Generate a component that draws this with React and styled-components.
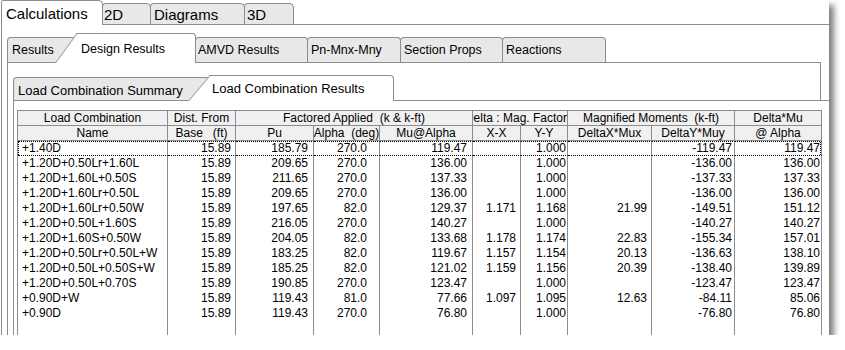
import React from "react";
import styled, { createGlobalStyle } from "styled-components";

const GlobalStyle = createGlobalStyle`
  html, body {
    margin: 0;
    padding: 0;
    background: #fff;
  }
  body {
    font-family: "Liberation Sans", Arial, sans-serif;
    color: #000;
  }
`;

const columns = [
  { key: "name", width: 150, align: "left", pad: 4 },
  { key: "dist", width: 68, pad: 4 },
  { key: "pu", width: 78, pad: 5 },
  { key: "alpha", width: 66, pad: 12 },
  { key: "mu", width: 93, pad: 5 },
  { key: "xx", width: 48, pad: 4 },
  { key: "yy", width: 47, pad: 1 },
  { key: "dx", width: 84, pad: 4 },
  { key: "dy", width: 83, pad: 2 },
  { key: "dmu", width: 87, pad: 1 },
];

const headTop = [
  { text: "Load Combination", span: 1 },
  { text: "Dist. From", span: 1 },
  { text: "Factored Applied  (k & k-ft)", span: 3 },
  { text: "Delta : Mag. Factor", span: 2, clip: true },
  { text: "Magnified Moments  (k-ft)", span: 2 },
  { text: "Delta*Mu", span: 1 },
];

const headBottom = [
  "Name",
  "Base   (ft)",
  "Pu",
  "Alpha  (deg)",
  "Mu@Alpha",
  "X-X",
  "Y-Y",
  "DeltaX*Mux",
  "DeltaY*Muy",
  "@ Alpha",
];

const rows = [
  ["+1.40D", "15.89", "185.79", "270.0", "119.47", "", "1.000", "", "-119.47", "119.47"],
  ["+1.20D+0.50Lr+1.60L", "15.89", "209.65", "270.0", "136.00", "", "1.000", "", "-136.00", "136.00"],
  ["+1.20D+1.60L+0.50S", "15.89", "211.65", "270.0", "137.33", "", "1.000", "", "-137.33", "137.33"],
  ["+1.20D+1.60Lr+0.50L", "15.89", "209.65", "270.0", "136.00", "", "1.000", "", "-136.00", "136.00"],
  ["+1.20D+1.60Lr+0.50W", "15.89", "197.65", "82.0", "129.37", "1.171", "1.168", "21.99", "-149.51", "151.12"],
  ["+1.20D+0.50L+1.60S", "15.89", "216.05", "270.0", "140.27", "", "1.000", "", "-140.27", "140.27"],
  ["+1.20D+1.60S+0.50W", "15.89", "204.05", "82.0", "133.68", "1.178", "1.174", "22.83", "-155.34", "157.01"],
  ["+1.20D+0.50Lr+0.50L+W", "15.89", "183.25", "82.0", "119.67", "1.157", "1.154", "20.13", "-136.63", "138.10"],
  ["+1.20D+0.50L+0.50S+W", "15.89", "185.25", "82.0", "121.02", "1.159", "1.156", "20.39", "-138.40", "139.89"],
  ["+1.20D+0.50L+0.70S", "15.89", "190.85", "270.0", "123.47", "", "1.000", "", "-123.47", "123.47"],
  ["+0.90D+W", "15.89", "119.43", "81.0", "77.66", "1.097", "1.095", "12.63", "-84.11", "85.06"],
  ["+0.90D", "15.89", "119.43", "270.0", "76.80", "", "1.000", "", "-76.80", "76.80"],
];

const LINE = "#8c8c8c";

export default function App() {
  return (
    <>
      <GlobalStyle />
      <Frame>
        <TabStrip $h={24}>
          <Tab $active $w={102} $h={25} $fs={15} $pl={4} $ml={0} $top>
            Calculations
          </Tab>
          <Tab $w={49} $h={21} $fs={15} $pl={1} $top>2D</Tab>
          <Tab $w={95} $h={21} $fs={15} $pl={3} $top>Diagrams</Tab>
          <Tab $w={50} $h={21} $fs={15} $pl={2} $top>3D</Tab>
        </TabStrip>

        <MainPanel>
          <TabStrip $h={29}>
            <Tab $w={70} $h={25} $fs={12.5} $pl={4} $ml={0}>Results</Tab>
            <Tab $active $slant={22} $w={119} $h={30} $fs={12.5} $pl={4} $ml={0}>
              Design Results
            </Tab>
            <Tab $w={113} $h={25} $fs={12.5} $pl={2}>AMVD Results</Tab>
            <Tab $w={94} $h={25} $fs={12.5} $pl={3}>Pn-Mnx-Mny</Tab>
            <Tab $w={103} $h={25} $fs={12.5} $pl={3}>Section Props</Tab>
            <Tab $w={104} $h={25} $fs={12.5} $pl={3}>Reactions</Tab>
          </TabStrip>

          <SubPanel>
            <TabStrip $h={25}>
              <Tab $w={197} $h={23} $fs={13} $pl={4} $ml={0} $low>
                Load Combination Summary
              </Tab>
              <Tab $active $slant={22} $w={184} $h={26} $fs={13} $pl={2} $ml={0}>
                Load Combination Results
              </Tab>
            </TabStrip>

            <ResultPanel>
              <Grid>
                {headTop.map((h) => (
                  <HeadCell key={h.text} $span={h.span} $clip={h.clip}>
                    {h.text}
                  </HeadCell>
                ))}
                {headBottom.map((t) => (
                  <HeadCell key={t}>{t}</HeadCell>
                ))}
                {rows.map((r, ri) =>
                  r.map((v, ci) => (
                    <Cell
                      key={ri + "-" + ci}
                      $align={columns[ci].align}
                      $pad={columns[ci].pad}
                      $focus={ri === 0}
                      $first={ci === 0}
                      $last={ci === r.length - 1}
                    >
                      {v}
                    </Cell>
                  ))
                )}
                {columns.map((c) => (
                  <Filler key={c.key} />
                ))}
              </Grid>
            </ResultPanel>
          </SubPanel>
        </MainPanel>
      </Frame>
    </>
  );
}

const Frame = styled.div`
  width: 829px;
  height: 335px;
  box-sizing: border-box;
  padding-left: 1px;
  overflow: hidden;
  background: #fff;
  display: flex;
  flex-direction: column;
  box-shadow: 5px 5px 6px rgba(0, 0, 0, 0.5);
`;

const TabStrip = styled.div`
  display: flex;
  align-items: flex-end;
  height: ${(p) => p.$h}px;
  flex-shrink: 0;
`;

const Tab = styled.div`
  position: relative;
  z-index: ${(p) => (p.$active ? 2 : 1)};
  box-sizing: border-box;
  display: flex;
  align-items: center;
  flex-shrink: 0;
  width: ${(p) => p.$w}px;
  height: ${(p) => p.$h}px;
  margin-left: ${(p) => (p.$ml !== undefined ? p.$ml : -1)}px;
  margin-bottom: ${(p) => (p.$active ? -1 : 0)}px;
  padding: ${(p) => (p.$low ? "2px" : "0")} 0 0 ${(p) => p.$pl}px;
  border: 1px solid ${LINE};
  border-bottom: none;
  border-left: ${(p) => (p.$slant ? "none" : `1px solid ${LINE}`)};
  border-radius: ${(p) =>
    p.$active ? (p.$slant ? "0 4px 0 0" : "2px 5px 0 0") : p.$top ? "4px 5px 0 0" : "4px 4px 0 0"};
  background: ${(p) => (p.$active ? "#fff" : "#e8e8e8")};
  font-size: ${(p) => p.$fs}px;
  white-space: nowrap;
  overflow: visible;

  ${(p) =>
    p.$slant &&
    `
    &::before {
      content: "";
      position: absolute;
      z-index: -1;
      top: -1px;
      bottom: 0;
      left: -${p.$slant}px;
      width: 34px;
      box-sizing: border-box;
      background: #fff;
      border-top: 1px solid ${LINE};
      border-left: 1px solid ${LINE};
      transform-origin: bottom left;
      transform: skewX(-${(Math.atan(p.$slant / p.$h) * 180) / Math.PI}deg);
    }
  `}
`;

const MainPanel = styled.div`
  flex: 1;
  min-height: 0;
  display: flex;
  flex-direction: column;
  border-top: 1px solid ${LINE};
  border-left: 1px solid ${LINE};
  padding: 8px 0 0 5px;
`;

const SubPanel = styled.div`
  flex: 1;
  min-height: 0;
  width: 814px;
  box-sizing: border-box;
  display: flex;
  flex-direction: column;
  border: 1px solid ${LINE};
  border-bottom: none;
  padding: 12px 0 0 5px;
`;

const ResultPanel = styled.div`
  flex: 1;
  min-height: 0;
  margin-right: -30px;
  background: #fff;
  border-top: 1px solid ${LINE};
  border-left: 1px solid ${LINE};
  padding: 9px 0 0 3px;
`;

const Grid = styled.div`
  display: grid;
  grid-template-columns: ${columns.map((c) => c.width + "px").join(" ")};
  grid-template-rows: 15px 15px repeat(${rows.length}, 15px) 40px;
  width: max-content;
  border-top: 1px solid ${LINE};
  border-left: 1px solid ${LINE};
  font-size: 12px;
`;

const HeadCell = styled.div`
  grid-column: span ${(p) => p.$span || 1};
  box-sizing: border-box;
  display: flex;
  align-items: center;
  justify-content: ${(p) => (p.$clip ? "flex-end" : "center")};
  overflow: hidden;
  white-space: pre;
  background: #f0f0f0;
  border-right: 1px solid ${LINE};
  border-bottom: 1px solid ${LINE};
  line-height: 14px;
`;

const Cell = styled.div`
  box-sizing: border-box;
  display: flex;
  align-items: center;
  justify-content: ${(p) => (p.$align === "left" ? "flex-start" : "flex-end")};
  padding: ${(p) => (p.$align === "left" ? `0 0 0 ${p.$pad}px` : `0 ${p.$pad}px 0 0`)};
  overflow: hidden;
  white-space: nowrap;
  border-right: 1px solid ${LINE};
  line-height: 13px;
  ${(p) =>
    p.$focus &&
    `
    border-top: 1px dotted #000;
    border-bottom: 1px dotted #000;
  `}
  ${(p) =>
    p.$focus &&
    p.$first &&
    `
    background: linear-gradient(#000 50%, transparent 50%) left top / 1px 2px repeat-y;
  `}
  ${(p) =>
    p.$focus &&
    p.$last &&
    `
    background: linear-gradient(#000 50%, transparent 50%) right top / 1px 2px repeat-y;
  `}
`;

const Filler = styled.div`
  border-right: 1px solid ${LINE};
`;
